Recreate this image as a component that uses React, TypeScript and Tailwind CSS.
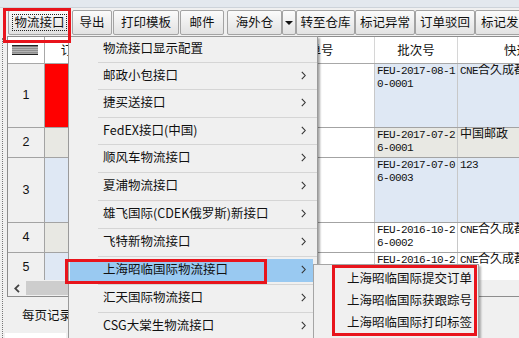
import React from "react";

const ui = "font-['Noto_Sans_CJK_SC','Noto_Sans',sans-serif]";
const mono = "font-['Liberation_Mono','Noto_Sans_CJK_SC',monospace]";

function Btn({ label, w, focus }: { label: string; w: string; focus?: boolean }) {
  return (
    <div
      className={`${w} h-[25px] shrink-0 relative flex items-center justify-center rounded-[2px] border border-[#a3a3a3] bg-gradient-to-b from-[#fbfbfb] to-[#e2e2e2] text-[12.5px] leading-none text-[#111]`}
    >
      {focus && <div className="absolute inset-[3px] border border-dotted border-[#222]" />}
      <span className="relative">{label}</span>
    </div>
  );
}

function Chevron() {
  return (
    <svg width="5" height="9" viewBox="0 0 5 9" className="shrink-0">
      <path d="M0.8 0.8 L4.2 4.5 L0.8 8.2" fill="none" stroke="#333" strokeWidth="1.1" />
    </svg>
  );
}

type Row = {
  h: string;
  n: string;
  c1: string;
  c4bg: string;
  batch: [string, string];
  exp: React.ReactNode;
};

const rows: Row[] = [
  { h: "h-[64px]", n: "1", c1: "bg-[#ff0000]", c4bg: "bg-[#dfe8f4]", batch: ["FEU-2017-08-1", "0-0001"], exp: <><span>CNE</span><span className="text-[12px] tracking-normal">合久成都</span></> },
  { h: "h-[30px]", n: "2", c1: "bg-[#e8e8e3]", c4bg: "bg-[#e8e8e3]", batch: ["FEU-2017-07-2", "6-0001"], exp: <span className="text-[12px] tracking-normal">中国邮政</span> },
  { h: "h-[65px]", n: "3", c1: "bg-[#dfe8f4]", c4bg: "bg-[#dfe8f4]", batch: ["FEU-2017-07-0", "6-0003"], exp: <span>123</span> },
  { h: "h-[30px]", n: "4", c1: "bg-[#e8e8e3]", c4bg: "bg-white", batch: ["FEU-2016-10-2", "6-0002"], exp: <><span>CNE</span><span className="text-[12px] tracking-normal">合久成都</span></> },
  { h: "h-[30px]", n: "5", c1: "bg-[#dfe8f4]", c4bg: "bg-white", batch: ["FEU-2016-10-2", "6-0004"], exp: <><span>CNE</span><span className="text-[12px] tracking-normal">合久成都</span></> },
];

const menuItems: { t: string; h: string; arrow: boolean; hl?: boolean }[] = [
  { t: "物流接口显示配置", h: "h-[25px]", arrow: false },
  { t: "邮政小包接口", h: "h-[27px]", arrow: true },
  { t: "捷买送接口", h: "h-[28px]", arrow: true },
  { t: "FedEX接口(中国)", h: "h-[27px]", arrow: true },
  { t: "顺风车物流接口", h: "h-[28px]", arrow: true },
  { t: "夏浦物流接口", h: "h-[28px]", arrow: true },
  { t: "雄飞国际(CDEK俄罗斯)新接口", h: "h-[28px]", arrow: true },
  { t: "飞特新物流接口", h: "h-[28px]", arrow: true },
  { t: "上海昭临国际物流接口", h: "h-[28px]", arrow: true, hl: true },
  { t: "汇天国际物流接口", h: "h-[28px]", arrow: true },
  { t: "CSG大棠生物流接口", h: "h-[28px]", arrow: true },
];

export default function App() {
  return (
    <div className={`w-[519px] h-[338px] overflow-hidden relative bg-[#f0f0f0] ${ui}`}>
      {/* top band */}
      <div className="h-[8px] bg-[#e3e8ee] border-b border-[#cdd3da]" />
      {/* toolbar */}
      <div className="h-[28px] flex items-start pt-[2px] pl-[8px]">
        <Btn label="物流接口" w="w-[63px]" focus />
        <div className="ml-[1px]"><Btn label="导出" w="w-[40px]" /></div>
        <div className="ml-[1px]"><Btn label="打印模板" w="w-[66px]" /></div>
        <div className="ml-[1px]"><Btn label="邮件" w="w-[44px]" /></div>
        <div className="ml-[3px]"><Btn label="海外仓" w="w-[55px]" /></div>
        <div className="w-[14px] h-[25px] shrink-0 flex items-center justify-center rounded-[2px] border border-[#a3a3a3] bg-gradient-to-b from-[#fbfbfb] to-[#e2e2e2]">
          <div className="w-0 h-0 border-l-[4px] border-r-[4px] border-t-[4px] border-l-transparent border-r-transparent border-t-[#111]" />
        </div>
        <Btn label="转至仓库" w="w-[59px]" />
        <Btn label="标记异常" w="w-[60px]" />
        <Btn label="订单驳回" w="w-[60px]" />
        <Btn label="标记发货" w="w-[62px]" />
      </div>

      {/* main */}
      <div className="h-[302px] flex">
        <div className="w-[7px] shrink-0 pl-[2px] pt-[2px]">
          <div className="h-full border-l border-dotted border-[#777]" />
        </div>
        <div className="flex-1 flex flex-col min-w-0">
          {/* grid */}
          <div className="h-[261px] border border-[#8d8d8d] border-r-0 bg-white flex flex-col overflow-hidden">
            {/* header */}
            <div className="h-[27px] shrink-0 flex border-b border-[#a8a8a8] text-[12.5px] text-[#111]">
              <div className="w-[37px] shrink-0 border-r border-[#a8a8a8] flex items-center pl-[4px]">
                <svg width="26" height="10" viewBox="0 0 26 10">
                  <rect x="0" y="0" width="26" height="1.6" fill="#222" />
                  <rect x="0" y="2.6" width="26" height="1" fill="#444" />
                  <rect x="0" y="4.6" width="26" height="1" fill="#444" />
                  <rect x="0" y="6.6" width="26" height="1" fill="#444" />
                  <rect x="0" y="8.6" width="26" height="1.4" fill="#222" />
                </svg>
              </div>
              <div className="w-[70px] shrink-0 border-r border-[#d6d6d6] flex items-center justify-center">订单号</div>
              <div className="w-[128px] shrink-0 border-r border-[#d6d6d6] flex items-center justify-center">单号</div>
              <div className="w-[132px] shrink-0 border-r border-[#d6d6d6] flex items-center justify-center">跟踪单号</div>
              <div className="w-[83px] shrink-0 border-r border-[#d6d6d6] flex items-center justify-center">批次号</div>
              <div className="w-[142px] shrink-0 flex items-center justify-center">快递方式</div>
            </div>
            {/* rows */}
            <div className="flex-1 overflow-hidden">
              {rows.map((r) => (
                <div key={r.n} className={`${r.h} flex border-b border-[#a3a3a3]`}>
                  <div className="w-[37px] shrink-0 bg-[#f0f0f0] border-r border-[#a3a3a3] flex items-center justify-center text-[12.5px] text-[#111] font-['Liberation_Sans',sans-serif]">
                    {r.n}
                  </div>
                  <div className={`w-[70px] shrink-0 border-r border-[#c8c8c8] ${r.c1}`} />
                  <div className="w-[128px] shrink-0 border-r border-[#c8c8c8] bg-white" />
                  <div className="w-[132px] shrink-0 border-r border-[#c8c8c8] bg-white" />
                  <div className={`w-[83px] shrink-0 border-r border-[#c8c8c8] ${r.c4bg} pl-[2px] pt-[1px] ${mono} text-[11px] tracking-[-0.6px] leading-[13px] text-[#111] whitespace-nowrap`}>
                    <div>{r.batch[0]}</div>
                    <div>{r.batch[1]}</div>
                  </div>
                  <div className={`w-[142px] shrink-0 ${r.c4bg} pl-[2px] pt-[1px] ${mono} text-[11px] tracking-[-0.6px] leading-[13px] text-[#111] whitespace-nowrap`}>
                    {r.exp}
                  </div>
                </div>
              ))}
            </div>
            {/* scrollbar */}
            <div className="h-[16px] shrink-0 flex bg-[#f0f0f0]">
              <div className="w-[18px] shrink-0 flex items-center justify-center">
                <svg width="6" height="9" viewBox="0 0 6 9">
                  <path d="M5 0.8 L1.2 4.5 L5 8.2" fill="none" stroke="#444" strokeWidth="1.8" />
                </svg>
              </div>
              <div className="w-[290px] my-[1px] bg-[#cdcdcd]" />
            </div>
          </div>
          {/* footer */}
          <div className="flex-1 flex flex-col">
            <div className="h-[36px] flex items-center pl-[15px] text-[12.5px] text-[#111]">每页记录数</div>
            <div className="ml-[-2px] w-[61px] flex-1 bg-white" />
          </div>
        </div>
      </div>

      {/* context menu */}
      <div className="absolute left-[68px] top-[36px] w-[250px] h-[310px] bg-[#f0f0f0] border border-[#9a9a9a] shadow-[2px_2px_2px_rgba(0,0,0,0.35)] text-[12.5px] text-[#111]">
        {menuItems.map((m, i) => (
          <div key={m.t} className={`${m.h} relative ${i > 0 ? "border-t border-[#d5d5d5] ml-[29px]" : "ml-[29px]"}`}>
            {m.hl && <div className="absolute left-[-28px] right-[4px] top-[2px] bottom-[2px] bg-[#99c9f1]" />}
            <div className="relative h-full flex items-center pl-[5px] pr-[11px] pb-[2px]">
              <span className="flex-1 whitespace-nowrap">{m.t}</span>
              {m.arrow && <Chevron />}
            </div>
          </div>
        ))}
      </div>

      {/* sub menu */}
      <div className="absolute left-[313px] top-[264px] w-[166px] h-[80px] bg-[#f0f0f0] border border-[#a5a5a5] shadow-[2px_2px_2px_rgba(0,0,0,0.3)] pt-[2px] text-[12.5px] text-[#111]">
        {["上海昭临国际提交订单", "上海昭临国际获跟踪号", "上海昭临国际打印标签"].map((t) => (
          <div key={t} className="h-[22px] flex items-center pl-[33px] whitespace-nowrap">{t}</div>
        ))}
      </div>

      {/* red annotation boxes */}
      <div className="absolute left-[3px] top-[8px] w-[68px] h-[35px] border-[3px] border-[#e8141c]" />
      <div className="absolute left-[65px] top-[259px] w-[202px] h-[25px] border-[3px] border-[#e8141c]" />
      <div className="absolute left-[332px] top-[265px] w-[145px] h-[71px] border-[3px] border-[#e8141c]" />
    </div>
  );
}
